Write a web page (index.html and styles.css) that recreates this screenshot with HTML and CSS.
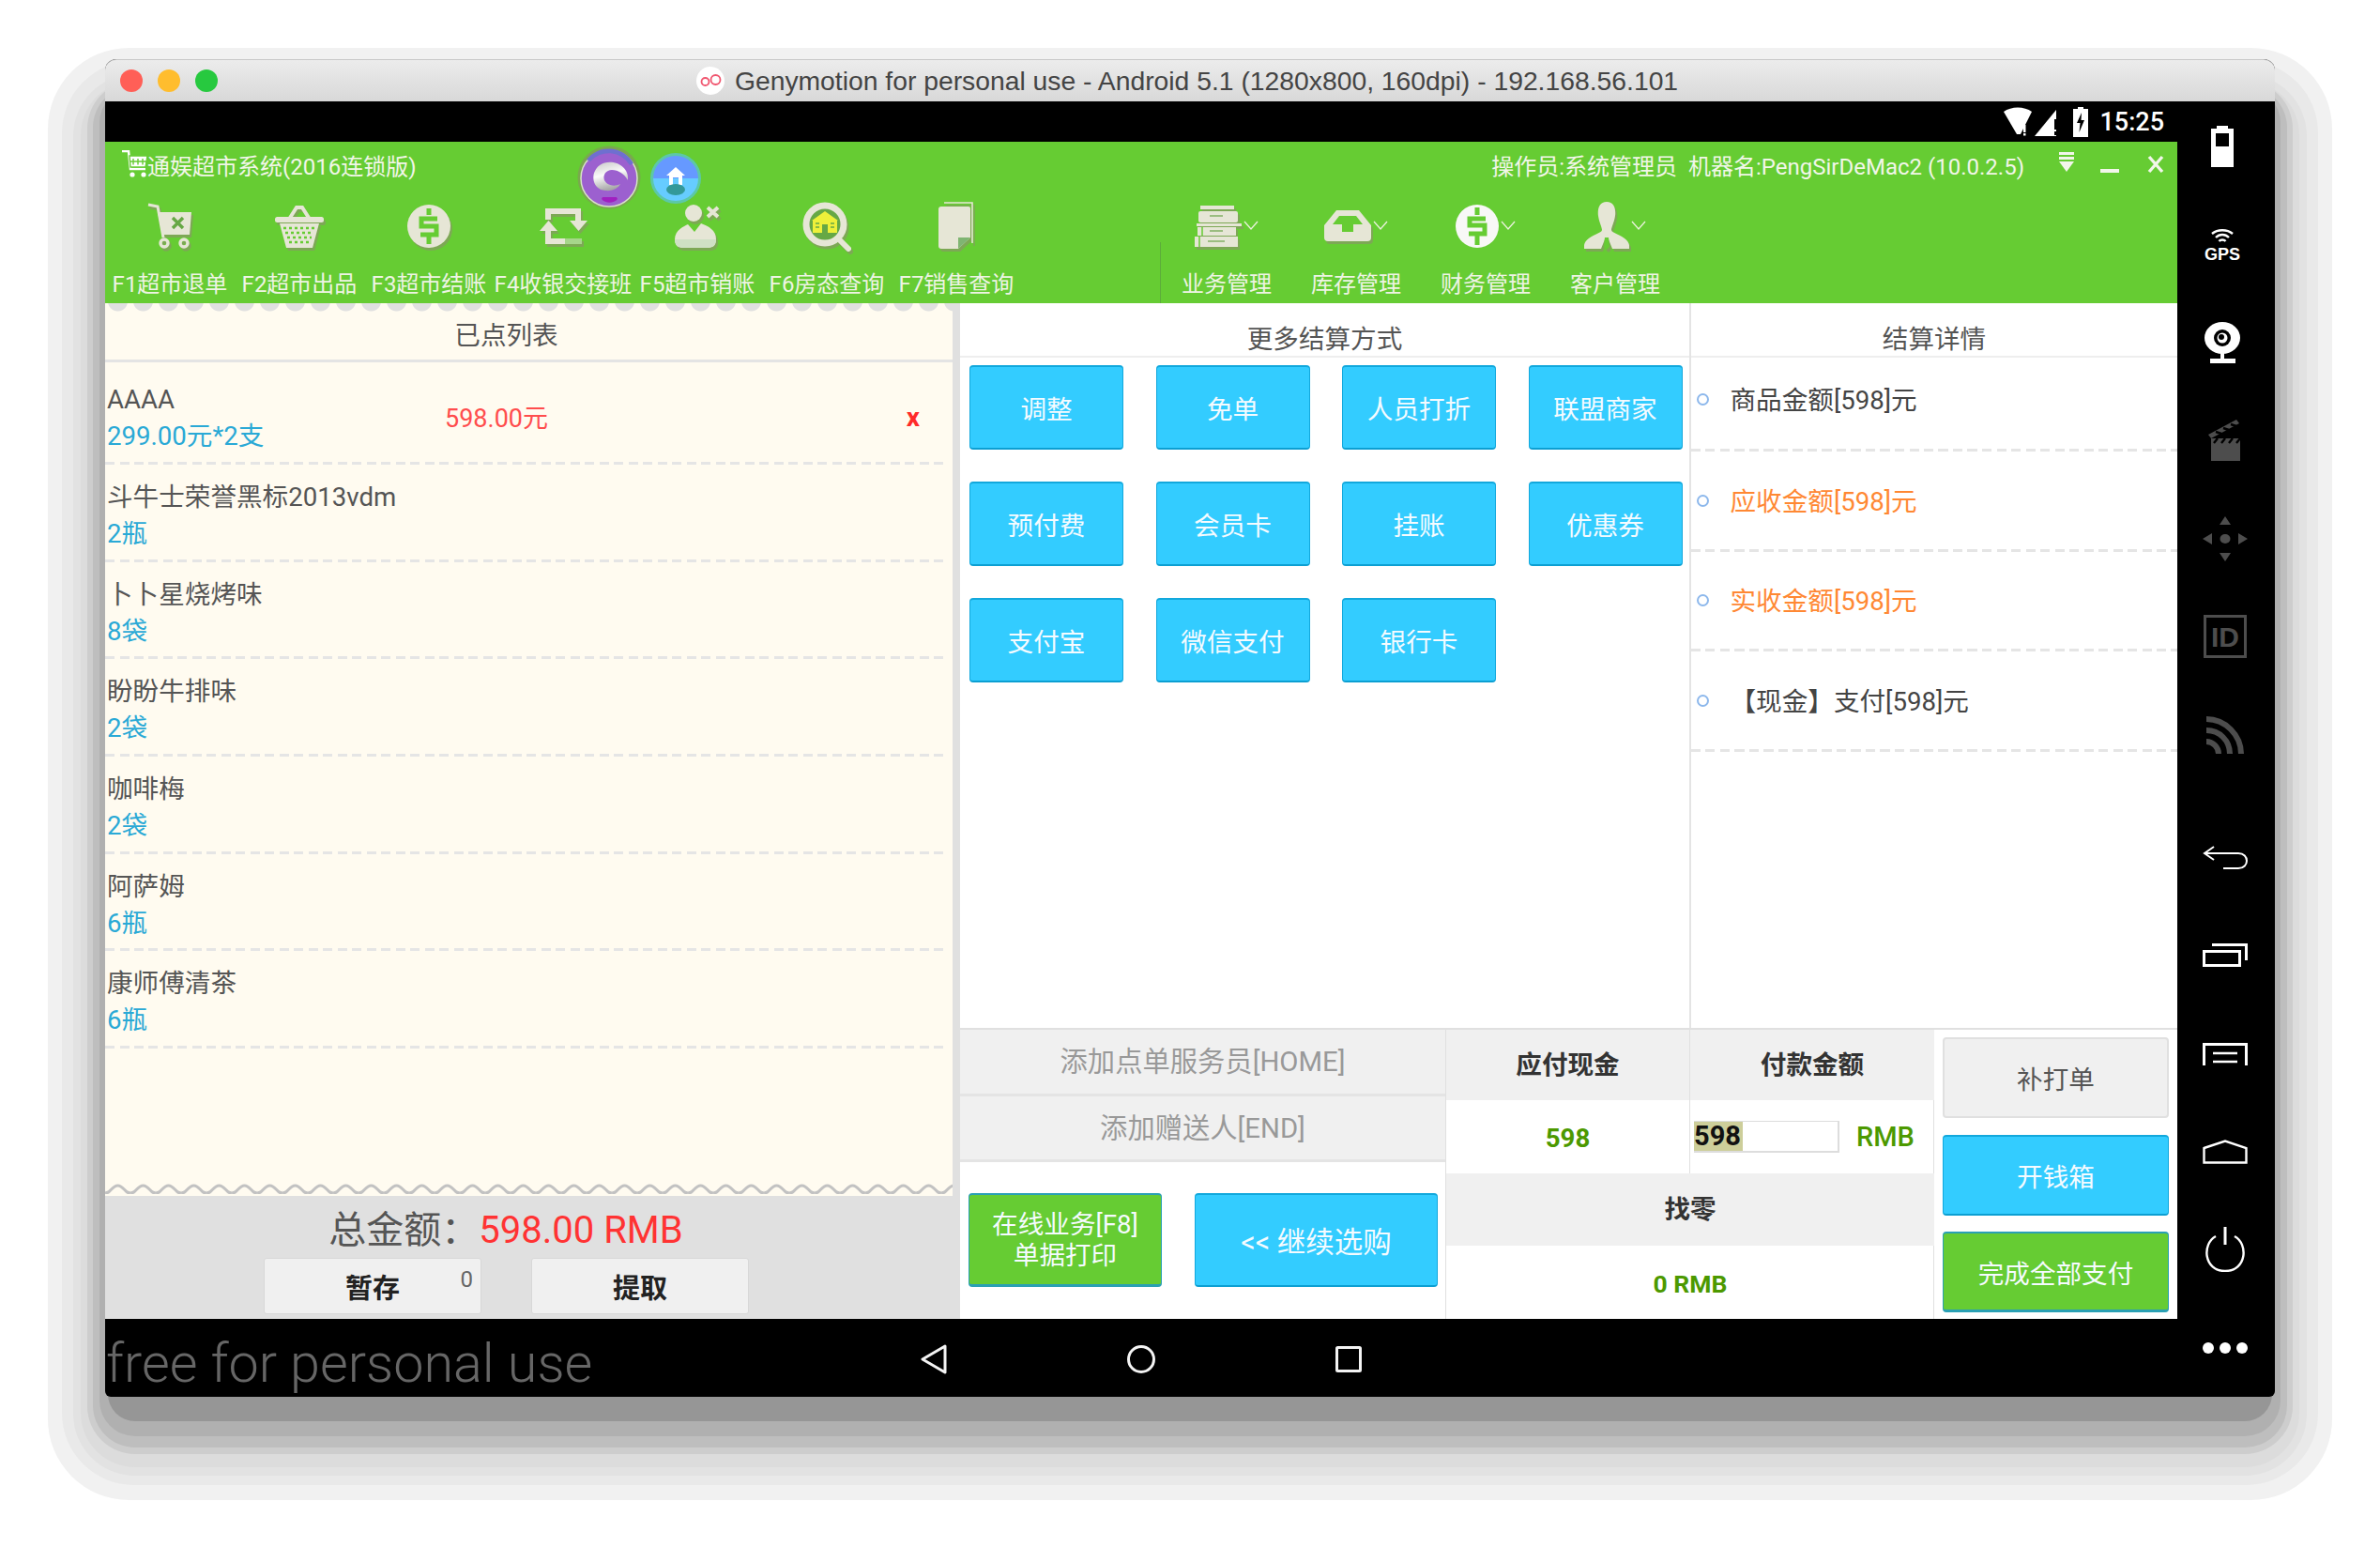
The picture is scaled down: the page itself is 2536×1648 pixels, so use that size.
FILE: index.html
```html
<!DOCTYPE html>
<html lang="zh">
<head>
<meta charset="utf-8">
<title>Genymotion</title>
<link rel="stylesheet" href="styles.css">
</head>
<body>
<div class="window">
  <header class="titlebar">
    <div class="lights"><i class="light red"></i><i class="light yellow"></i><i class="light green"></i></div>
    <div class="wintitle">
      <svg class="genylogo" viewBox="0 0 30 30" width="30" height="30"><circle cx="15" cy="15" r="15" fill="#fff"/><circle cx="9.5" cy="16" r="4" fill="none" stroke="#f0566f" stroke-width="1.8"/><circle cx="20.5" cy="14" r="5" fill="none" stroke="#f0566f" stroke-width="1.8"/></svg>
      <span>Genymotion for personal use - Android 5.1 (1280x800, 160dpi) - 192.168.56.101</span>
    </div>
  </header>
  <div class="device">
    <div class="android">
      <div class="statusbar">
        <svg viewBox="0 0 60 34" width="60" height="34" class="st-icons"><path d="M0 6 C8 0 22 0 30 6 L18 30 H14Z" fill="#fff"/><rect x="21" y="20" width="2.5" height="8" fill="#fff"/><rect x="21" y="29" width="2.5" height="2.5" fill="#fff"/><path d="M33 32 L56 4 V32Z" fill="#fff"/><rect x="54" y="14" width="3" height="11" fill="#000"/><rect x="54" y="27" width="3" height="4" fill="#000"/></svg>
        <svg viewBox="0 0 16 32" width="16" height="32" class="st-batt"><path d="M5 0 H11 V2 H16 V32 H0 V2 H5Z" fill="#fff"/><path d="M9 6 L4 17 H7.5 L6.5 27 L12 14 H8.5Z" fill="#000"/></svg>
        <span class="clock">15:25</span>
      </div>
      <div class="appbar">
        <div class="appbar-top">
          <div class="apptitle">
            <svg viewBox="0 0 28 30" width="28" height="30" class="cart-mini"><path d="M0 1 H7 L9 20 H25" fill="none" stroke="#fff" stroke-width="2.5"/><path d="M8 6 H27 L25 18 H9Z M12 9 V15.5 M17 9 V15.5 M22 9 V15.5 M8.5 12 H26" fill="#fff" stroke="#66cc33" stroke-width="1.4"/><circle cx="11" cy="26" r="2.6" fill="#fff"/><circle cx="23" cy="26" r="2.6" fill="#fff"/></svg>
            <span>通娱超市系统(2016连锁版)</span>
          </div>
          <div class="appinfo">
            <span>操作员:系统管理员&nbsp; 机器名:PengSirDeMac2 (10.0.2.5)</span>
            <svg viewBox="0 0 18 22" width="18" height="22" class="win-btn gap0"><rect x="1" y="0" width="16" height="3" fill="#f2f6ea"/><rect x="1" y="5" width="16" height="3" fill="#f2f6ea"/><path d="M1 10 H17 L9 21Z" fill="#f2f6ea"/></svg>
            <svg viewBox="0 0 20 22" width="20" height="22" class="win-btn gap1"><rect x="0" y="15" width="20" height="4" fill="#f2f6ea"/></svg>
            <svg viewBox="0 0 20 22" width="20" height="22" class="win-btn gap2"><path d="M3 3 L17 19 M17 3 L3 19" stroke="#f2f6ea" stroke-width="3.4"/></svg>
          </div>
        </div>
        <div class="toolbar">
          <div class="tool">
            <svg class="tool-ic" viewBox="0 0 46 48" width="46" height="48"><path d="M0 1 L10 3 L16 36" fill="none" stroke="currentColor" stroke-width="3"/><path d="M10 9 H46 L44 33 H15Z" fill="currentColor"/><path d="M26 15 L37 26 M37 15 L26 26" stroke="#66a845" stroke-width="3.4"/><circle cx="17" cy="42" r="4" fill="none" stroke="currentColor" stroke-width="3.4"/><circle cx="38" cy="42" r="4" fill="none" stroke="currentColor" stroke-width="3.4"/></svg>
            <span class="tool-l">F1超市退单</span>
          </div>
          <div class="tool">
            <svg class="tool-ic" viewBox="0 0 52 46" width="52" height="46"><path d="M16 14 L23 3 H29 L36 14" fill="none" stroke="currentColor" stroke-width="4"/><rect x="0" y="13" width="52" height="6" rx="2.5" fill="currentColor"/><path d="M5 20 H47 L40 46 H12Z" fill="currentColor"/><path d="M9 25 H43 M11 30 H41 M13 35 H39 M15 40 H37" stroke="#66cc33" stroke-width="2.4" stroke-dasharray="3 3"/></svg>
            <span class="tool-l">F2超市出品</span>
          </div>
          <div class="tool">
            <svg class="tool-ic" viewBox="0 0 46 46" width="46" height="46"><circle cx="23" cy="23" r="23" fill="currentColor"/><path d="M23 4 V11 M32 15 H15 V23 H31 V32 H14 M23 32 V42" fill="none" stroke="#66cc33" stroke-width="5"/></svg>
            <span class="tool-l">F3超市结账</span>
          </div>
          <div class="tool tool-wide">
            <svg class="tool-ic" viewBox="0 0 52 38" width="52" height="38"><path d="M10 12 V3 H42 V14" fill="none" stroke="currentColor" stroke-width="6"/><path d="M33 13 H52 L42.500 24Z M1 24 H20 L10.500 13Z" fill="currentColor"/><path d="M10 22 V35 H43" fill="none" stroke="currentColor" stroke-width="6"/><path d="M28 35 H46" stroke="#a6d68a" stroke-width="6"/></svg>
            <span class="tool-l">F4收银交接班</span>
          </div>
          <div class="tool">
            <svg class="tool-ic" viewBox="0 0 48 48" width="48" height="48"><circle cx="20" cy="10" r="9" fill="currentColor"/><path d="M0 38 C0 28 10 24 14 22 L21 30 L28 21 C36 24 44 28 44 38 C44 45 40 47 34 47 H10 C4 47 0 45 0 38Z" fill="currentColor"/><path d="M0 38 H44 C44 45 40 47 34 47 H10 C4 47 0 45 0 38Z" fill="#cfe0c4"/><path d="M35 4 L46 14 M46 4 L35 14" stroke="currentColor" stroke-width="4"/></svg>
            <span class="tool-l">F5超市销账</span>
          </div>
          <div class="tool">
            <svg class="tool-ic" viewBox="0 0 52 52" width="52" height="52"><circle cx="24" cy="24" r="20" fill="#66a845" stroke="currentColor" stroke-width="7"/><path d="M38 39 L49 50" stroke="currentColor" stroke-width="6" stroke-linecap="round"/><path d="M24 10 L38 20 H10Z" fill="#eef03a"/><rect x="11" y="20" width="26" height="13" fill="#eef03a"/><rect x="21" y="24" width="6" height="9" fill="#66a845"/><path d="M14 23 H18 M14 27 H18 M30 23 H34 M30 27 H34" stroke="#66a845" stroke-width="1.4"/></svg>
            <span class="tool-l">F6房态查询</span>
          </div>
          <div class="tool">
            <svg class="tool-ic" viewBox="0 0 40 52" width="40" height="52"><path d="M7 1 H37 V44" fill="none" stroke="currentColor" stroke-width="1.6"/><path d="M4 5 H33 Q35 5 35 7 V38 L22 50 H4 Q1 50 1 47 V8 Q1 5 4 5Z" fill="currentColor"/><path d="M35 38 L22 50 V38Z" fill="#7fb572"/></svg>
            <span class="tool-l">F7销售查询</span>
          </div>
          <i class="tool-sep"></i>
          <div class="tool">
            <div class="tool-row">
              <svg class="tool-ic" viewBox="0 0 50 44" width="50" height="44"><rect x="6" y="0" width="36" height="4" fill="currentColor"/><rect x="4" y="6" width="42" height="12" rx="2" fill="currentColor"/><rect x="2" y="19" width="48" height="3" fill="currentColor"/><rect x="3" y="23" width="41" height="9" fill="currentColor"/><rect x="0" y="33" width="46" height="11" fill="currentColor"/><path d="M16 11 H30 M16 27 H30 M14 38 H32" stroke="#9bbd80" stroke-width="2"/><path d="M8 23 V32 M5 33 V44" stroke="#66cc33" stroke-width="1.5"/></svg>
              <svg class="chev" viewBox="0 0 16 10" width="16" height="10"><path d="M1 1 L8 9 L15 1" fill="none" stroke="#eaf2dc" stroke-width="1.3"/></svg>
            </div>
            <span class="tool-l">业务管理</span>
          </div>
          <div class="tool">
            <div class="tool-row">
              <svg class="tool-ic" viewBox="0 0 50 36" width="50" height="36"><path d="M13 1 H37 L50 17 V30 Q50 34 46 34 H4 Q0 34 0 30 V17Z" fill="currentColor"/><path d="M16 7 H34 L41 16 H31 V24 H19 V16 H9Z" fill="#66cc33"/></svg>
              <svg class="chev" viewBox="0 0 16 10" width="16" height="10"><path d="M1 1 L8 9 L15 1" fill="none" stroke="#eaf2dc" stroke-width="1.3"/></svg>
            </div>
            <span class="tool-l">库存管理</span>
          </div>
          <div class="tool">
            <div class="tool-row">
              <svg class="tool-ic white" viewBox="0 0 46 46" width="46" height="46"><circle cx="23" cy="23" r="23" fill="#f8f8f6"/><path d="M23 3 V11 M32 15 H15 V22 H31 V31 H14 M23 31 V43" fill="none" stroke="#66cc33" stroke-width="5"/></svg>
              <svg class="chev" viewBox="0 0 16 10" width="16" height="10"><path d="M1 1 L8 9 L15 1" fill="none" stroke="#eaf2dc" stroke-width="1.3"/></svg>
            </div>
            <span class="tool-l">财务管理</span>
          </div>
          <div class="tool">
            <div class="tool-row">
              <svg class="tool-ic" viewBox="0 0 48 52" width="48" height="52"><path d="M24 0 C32 0 34 8 33 15 C32 22 29 27 29 30 C29 34 46 36 48 46 V50 H30 L26 40 H22 L18 50 H0 V46 C2 36 19 34 19 30 C19 27 16 22 15 15 C14 8 16 0 24 0Z" fill="currentColor"/><path d="M22 38 H26 L27 48 L24 51 L21 48Z" fill="#66cc33"/></svg>
              <svg class="chev" viewBox="0 0 16 10" width="16" height="10"><path d="M1 1 L8 9 L15 1" fill="none" stroke="#eaf2dc" stroke-width="1.3"/></svg>
            </div>
            <span class="tool-l">客户管理</span>
          </div>
        </div>
        <svg class="float-a" viewBox="0 0 68 70" width="68" height="70"><defs><linearGradient id="swirl" x1="0" y1="0" x2="0.3" y2="1"><stop offset="0" stop-color="#c8c8c8"/><stop offset="0.5" stop-color="#fafafa"/><stop offset="1" stop-color="#a8a8a8"/></linearGradient></defs><circle cx="34" cy="35" r="33.500" fill="#7aa84e"/><circle cx="34" cy="36" r="30" fill="#9c60cf" stroke="#d8e2c8" stroke-width="1.500"/><path d="M10 16 A30 30 0 0 1 60 20 L56 22 A26 26 0 0 0 14 18Z" fill="#6f6fd0"/><path d="M54 38 C56 22 36 14 24 22 C13 30 16 48 30 49 C38 50 44 46 46 42 C40 45 32 44 29 38 C27 32 31 27 37 27 C44 27 50 31 54 38Z" fill="url(#swirl)"/><path d="M26 58 C30 63 39 63 43 58 L42 56 H27Z" fill="#a020c0"/></svg>
        <svg class="float-b" viewBox="0 0 54 54" width="54" height="54"><circle cx="27" cy="27" r="27" fill="#5cc8a8"/><path d="M3 27 A24 24 0 0 1 51 27Z" fill="#6699ff"/><path d="M3 27 A24 24 0 0 0 51 27Z" fill="#66ccff"/><path d="M27 15 L37 24 H34 V34 H30 V26 H24 V34 H20 V24 H17Z" fill="#fff"/><ellipse cx="27" cy="39" rx="10" ry="6" fill="#339999"/></svg>
      </div>
      <main class="content">
        <section class="left">
          <div class="receipt">
            <div class="scallop"></div>
            <h2 class="receipt-h">已点列表</h2>
            <ul class="orders">
              <li class="order"><div><div class="o-name">AAAA</div><div class="o-sub">299.00元*2支</div></div><span class="o-price">598.00元</span><span class="o-del">x</span></li>
              <li class="order"><div><div class="o-name">斗牛士荣誉黑标2013vdm</div><div class="o-sub">2瓶</div></div></li>
              <li class="order"><div><div class="o-name">卜卜星烧烤味</div><div class="o-sub">8袋</div></div></li>
              <li class="order"><div><div class="o-name">盼盼牛排味</div><div class="o-sub">2袋</div></div></li>
              <li class="order"><div><div class="o-name">咖啡梅</div><div class="o-sub">2袋</div></div></li>
              <li class="order"><div><div class="o-name">阿萨姆</div><div class="o-sub">6瓶</div></div></li>
              <li class="order"><div><div class="o-name">康师傅清茶</div><div class="o-sub">6瓶</div></div></li>
            </ul>
            <svg class="wave" width="903" height="14" viewBox="0 0 903 14"><defs><pattern id="wv" width="27" height="14" patternUnits="userSpaceOnUse"><path d="M-1 0 H28 V9 C22 13 20 2 13.500 2 C7 2 5 13 -1 9Z" fill="#fffbf0"/><path d="M0 10 C5 13 7 3 13.500 3 C20 3 22 13 27 10" fill="none" stroke="#c2c2c2" stroke-width="3"/></pattern></defs><rect width="903" height="14" fill="url(#wv)"/></svg>
          </div>
          <div class="total"><span class="t-label">总金额：</span><em>598.00 RMB</em></div>
          <div class="left-btns">
            <button class="gbtn hold">暂存<sup>0</sup></button>
            <button class="gbtn">提取</button>
          </div>
        </section>
        <section class="right">
          <div class="right-top">
            <div class="more">
              <h2 class="panel-h">更多结算方式</h2>
              <div class="paygrid">
                <button class="btn blue">调整</button>
                <button class="btn blue">免单</button>
                <button class="btn blue">人员打折</button>
                <button class="btn blue">联盟商家</button>
                <button class="btn blue">预付费</button>
                <button class="btn blue">会员卡</button>
                <button class="btn blue">挂账</button>
                <button class="btn blue">优惠券</button>
                <button class="btn blue">支付宝</button>
                <button class="btn blue">微信支付</button>
                <button class="btn blue">银行卡</button>
              </div>
            </div>
            <div class="detail">
              <h2 class="panel-h">结算详情</h2>
              <ul class="details">
                <li class="d-row"><i class="dot"></i>商品金额[598]元</li>
                <li class="d-row orange"><i class="dot"></i>应收金额[598]元</li>
                <li class="d-row orange"><i class="dot"></i>实收金额[598]元</li>
                <li class="d-row"><i class="dot"></i>【现金】支付[598]元</li>
              </ul>
            </div>
          </div>
          <div class="right-bottom">
            <div class="b-left">
              <div class="addrow">添加点单服务员[HOME]</div>
              <div class="addrow">添加赠送人[END]</div>
              <div class="b-actions">
                <button class="btn green online">在线业务[F8]<br>单据打印</button>
                <button class="btn blue cont">&lt;&lt; 继续选购</button>
              </div>
            </div>
            <div class="b-table">
              <div class="th">应付现金</div>
              <div class="th bl">付款金额</div>
              <div class="td val">598</div>
              <div class="td bl payin"><span class="input"><mark>598</mark></span><span class="val rmb">RMB</span></div>
              <div class="th wide">找零</div>
              <div class="td val wide change">0 RMB</div>
            </div>
            <div class="b-right">
              <button class="btn grey">补打单</button>
              <button class="btn blue">开钱箱</button>
              <button class="btn green">完成全部支付</button>
            </div>
          </div>
        </section>
      </main>
      <footer class="navbar">
        <span class="free">free for personal use</span>
        <div class="navkeys">
          <svg viewBox="0 0 30 32" width="30" height="32"><path d="M27 2 L3 16 L27 30Z" fill="none" stroke="#f4f4f4" stroke-width="3" stroke-linejoin="round"/></svg>
          <svg viewBox="0 0 30 32" width="30" height="32"><circle cx="15" cy="16" r="13.500" fill="none" stroke="#f4f4f4" stroke-width="3"/></svg>
          <svg viewBox="0 0 30 32" width="30" height="32"><rect x="2.500" y="3.500" width="25" height="25" rx="1" fill="none" stroke="#f4f4f4" stroke-width="3"/></svg>
        </div>
      </footer>
    </div>
    <aside class="side">
      <div class="side-group">
        <div class="slot slot-l"><svg viewBox="0 0 24 44" width="24" height="44"><path d="M6 0 H18 V3 H24 V44 H0 V3 H6Z" fill="#fff"/><rect x="5" y="8" width="14" height="14" fill="#000"/></svg></div>
        <div class="slot slot-l"><svg viewBox="0 -4 44 44" width="44" height="44"><path d="M11 6 C17 1 27 1 33 6 M15 10 C19 6 25 6 29 10 M18.500 14 C20 12 24 12 25.500 14" fill="none" stroke="#fff" stroke-width="2.400"/><text x="22" y="34" class="gps">GPS</text></svg></div>
        <div class="slot slot-l"><svg viewBox="0 0 38 44" width="38" height="44"><ellipse cx="19" cy="17" rx="19" ry="17" fill="#fff"/><circle cx="19" cy="17" r="9" fill="#000"/><circle cx="19" cy="17" r="5.500" fill="#fff"/><circle cx="18" cy="16" r="3" fill="#000"/><rect x="17" y="33" width="4" height="6" fill="#fff"/><rect x="6" y="39" width="27" height="5" fill="#fff"/></svg></div>
        <div class="slot"><svg viewBox="0 0 36 44" width="36" height="44"><path d="M0 16 L30 0 L33 4 L3 20Z" fill="#4d4d4d"/><path d="M8 13 L14 15 M16 9 L22 11 M24 5 L30 7" stroke="#000" stroke-width="2.400"/><rect x="3" y="20" width="31" height="24" fill="#4d4d4d"/><path d="M6 25 L10 20 M14 25 L18 20 M22 25 L26 20 M30 25 L34 20" stroke="#000" stroke-width="2.400"/></svg></div>
        <div class="slot"><svg viewBox="0 0 48 48" width="48" height="48"><path d="M24 0 L30 9 H18Z M24 48 L18 39 H30Z M0 24 L10 18 V30Z M48 24 L38 30 V18Z" fill="#4d4d4d"/><ellipse cx="24" cy="24" rx="5.500" ry="5" fill="#4d4d4d"/></svg></div>
        <div class="slot"><svg viewBox="0 0 46 46" width="46" height="46"><rect x="1.500" y="1.500" width="43" height="43" fill="none" stroke="#4d4d4d" stroke-width="3"/><text x="23" y="34" class="idt">ID</text></svg></div>
        <div class="slot"><svg viewBox="0 0 40 40" width="40" height="40"><path d="M0 3 C20 3 37 20 37 40 M0 15 C14 15 25 26 25 40 M0 27 C7 27 13 33 13 40" fill="none" stroke="#4d4d4d" stroke-width="6"/></svg></div>
      </div>
      <div class="side-group second">
        <div class="slot"><svg viewBox="0 0 48 26" width="48" height="26"><path d="M12 1 L2 8 L12 15 M2 8 H38 C50 8 50 24 38 24 H22" fill="none" stroke="#fff" stroke-width="2"/></svg></div>
        <div class="slot"><svg viewBox="0 0 48 26" width="48" height="26"><rect x="1.500" y="8.500" width="38" height="15" fill="none" stroke="#fff" stroke-width="3"/><path d="M10 1.500 H46.500 V18" fill="none" stroke="#fff" stroke-width="3"/></svg></div>
        <div class="slot"><svg viewBox="0 0 48 24" width="48" height="24"><path d="M1.500 24 V1.500 H46.500 V24" fill="none" stroke="#fff" stroke-width="3"/><path d="M11 11 H37 M11 20 H37" stroke="#fff" stroke-width="2.400"/></svg></div>
        <div class="slot"><svg viewBox="0 0 48 26" width="48" height="26"><path d="M1.500 9 L24 1.500 L46.500 9 V24.500 H1.500Z" fill="none" stroke="#fff" stroke-width="2.400"/></svg></div>
        <div class="slot"><svg viewBox="0 0 46 48" width="46" height="48"><path d="M13 10 C-2 18 0 47 23 47 C46 47 48 18 33 10" fill="none" stroke="#fff" stroke-width="2.400"/><path d="M23 0 V19" stroke="#fff" stroke-width="3"/></svg></div>
        <div class="slot"><svg viewBox="0 0 48 12" width="48" height="12"><circle cx="6" cy="6" r="6" fill="#fff"/><circle cx="24" cy="6" r="6" fill="#fff"/><circle cx="42" cy="6" r="6" fill="#fff"/></svg></div>
      </div>
    </aside>
  </div>
</div>
</body>
</html>
```
FILE: styles.css
```css
* { box-sizing: border-box; }
html { margin: 0; background: #fff; }
body {
  width: 2536px;
  height: 1648px;
  margin: 0;
  padding: 63px 0 0 112px;
  overflow: hidden;
  font-family: Roboto, "Noto Sans CJK SC", sans-serif;
  font-size: 27.6px;
  color: #555;
}
ul { list-style: none; margin: 0; padding: 0; }
h2 { margin: 0; font-weight: 400; font-size: 27.6px; text-align: center; color: #555; }

.window {
  position: relative;
  width: 2312px;
  height: 1425px;
  border-radius: 12px 12px 6px 6px;
  background: #000;
}
.window::before {
  content: "";
  position: absolute;
  inset: 0;
  z-index: -1;
  border-radius: 32px;
  box-shadow:
    0 29px 0 -3px #969696,
    0 36px 0 6px #b0b0b0,
    0 41px 0 13px #bebebe,
    0 42px 0 19px #cdcdcd,
    0 49px 0 26px #dcdcdc,
    0 50px 0 34px #e2e2e2,
    0 48px 0 46px #e9e9e9,
    0 49px 0 61px #f1f1f1;
}

.titlebar {
  position: relative;
  display: flex;
  align-items: center;
  justify-content: center;
  height: 45px;
  border-radius: 12px 12px 0 0;
  background: linear-gradient(#ececec, #d8d8d8);
  border-top: 1px solid #c8c8c8;
}
.lights { position: absolute; left: 16px; top: 10px; display: flex; gap: 16px; }
.light { width: 24px; height: 24px; border-radius: 50%; }
.light.red { background: #ff5f57; }
.light.yellow { background: #ffbd2e; }
.light.green { background: #27c93f; }
.wintitle {
  display: flex;
  align-items: center;
  gap: 11px;
  margin-left: -6px;
  font-family: "Liberation Sans", sans-serif;
  font-size: 28.3px;
  color: #444;
  white-space: nowrap;
}

.device { display: grid; grid-template-columns: 2208px 104px; height: 1380px; }
.android { display: flex; flex-direction: column; min-width: 0; }

.statusbar { display: flex; align-items: center; justify-content: flex-end; height: 43px; padding-right: 14px; color: #fff; }
.st-icons { margin-right: 14px; }
.st-batt { margin-right: 12px; }
.clock { font-size: 27px; font-weight: 500; }

.appbar { position: relative; display: flex; flex-direction: column; height: 172px; background: #66cc33; color: #f1f6e8; }
.appbar-top { display: flex; justify-content: space-between; height: 60px; padding: 6px 13px 0 18px; }
.apptitle { display: flex; align-items: center; height: 36px; font-size: 24px; color: #f1f6e8; }
.cart-mini { flex: none; margin-right: -1px; }
.appinfo { display: flex; align-items: center; height: 36px; font-size: 24px; white-space: nowrap; }
.win-btn { flex: none; }
.gap0 { margin-left: 36px; margin-top: -4px; }
.gap1 { margin-left: 27px; margin-top: 2px; }
.gap2 { margin-left: 29px; }

.toolbar { display: flex; flex: 1; }
.tool { position: relative; display: flex; flex: none; flex-direction: column; align-items: center; width: 138px; }
.tool-wide { width: 148px; }
.tool-row { display: flex; align-items: center; justify-content: center; height: 60px; gap: 2px; }
.tool > .tool-ic { height: 60px; padding: 4px 0; }
.tool-ic { flex: none; color: #e6e6d6; filter: drop-shadow(2px 3px 0 #7da855); overflow: visible; }
.tool-ic.white { filter: none; }
.tool-l { margin-top: 14px; font-size: 24px; line-height: 36px; white-space: nowrap; color: #eef4e4; }
.tool-sep { flex: none; align-self: flex-end; width: 1px; height: 65px; margin-left: 148px; margin-right: 1px; background: #5cac3a; }
.chev { flex: none; margin-top: -2px; }
.float-a { position: absolute; left: 503px; top: 3px; }
.float-b { position: absolute; left: 581px; top: 12px; }

.content { display: flex; height: 1082px; background: #fff; }
.left { display: flex; flex: none; flex-direction: column; width: 911px; background: #e0e0e0; }
.receipt { display: flex; flex-direction: column; width: 903px; height: 951px; background: #fffbf0; }
.scallop {
  flex: none;
  height: 10px;
  background: radial-gradient(circle at 13.5px -2px, #e0e0e0 10px, transparent 11px) 0 0 / 27px 10px repeat-x;
}
.receipt-h { flex: none; height: 53px; padding-right: 48px; border-bottom: 3px solid #e4e4e4; line-height: 50px; }
.orders { flex: 1; padding-top: 5.5px; }
.order {
  display: grid;
  grid-template-columns: 360px 1fr auto;
  align-items: center;
  height: 103.65px;
  margin-right: 7px;
  padding: 0 26px 0 2px;
  background: repeating-linear-gradient(90deg, #e5e5e5 0 10px, transparent 10px 15.5px) 0 100% / 100% 3px no-repeat;
}
.order > div { margin-top: 4px; }
.o-name { line-height: 39px; color: #555; white-space: nowrap; }
.o-sub { line-height: 39px; color: #2aa9d6; white-space: nowrap; }
.o-price { color: #ff4d4d; font-size: 27px; margin-top: 1px; }
.o-del { color: #ff2a2a; font-weight: 700; font-size: 28px; margin-right: 2px; margin-top: 2px; }
.wave { flex: none; display: block; }

.total { flex: none; width: 854px; height: 63px; margin-top: 2px; padding-top: 6px; text-align: center; font-size: 40px; line-height: 58px; color: #555; }
.t-label { font-family: Roboto, "Noto Sans CJK TC", sans-serif; }
.total em { font-style: normal; color: #ff3333; }
.left-btns { display: flex; gap: 53px; margin-top: 1px; padding-left: 169px; }
.gbtn {
  position: relative;
  width: 232px;
  height: 60px;
  border: 1px solid #d8d8d8;
  border-radius: 3px;
  background: #f0f0f0;
  font: 700 29px Roboto, "Noto Sans CJK SC", sans-serif;
  color: #222;
  padding: 0;
}
.gbtn sup { position: absolute; right: 8px; top: 8px; font-size: 24px; font-weight: 400; line-height: 28px; color: #666; }

.right { display: flex; flex: 1; flex-direction: column; min-width: 0; }
.right-top { display: flex; height: 772px; }
.more { flex: none; width: 779px; border-right: 2px solid #e4e4e4; }
.detail { flex: 1; min-width: 0; }
.panel-h { height: 58px; padding-top: 20px; line-height: 38px; border-bottom: 2px solid #eee; }
.paygrid { display: grid; grid-template-columns: repeat(4, 164px); grid-auto-rows: 90px; column-gap: 34.5px; row-gap: 34px; padding: 8px 0 0 10px; }
.btn {
  border-radius: 4px;
  border: 0;
  padding: 0;
  font: 400 27.6px Roboto, "Noto Sans CJK SC", sans-serif;
  color: #f5fbff;
}
.btn.blue { background: #33ccff; border: 1px solid #12a8dc; border-top-width: 2px; border-bottom: 2px solid #0c9fd2; }
.btn.green { background: #66cc33; border: 1px solid #2aa0b4; border-top-width: 2px; border-bottom-width: 3px; }
.btn.grey { background: #f0f0f0; border: 2px solid #e0e0e0; color: #555; }

.d-row {
  display: flex;
  height: 106.7px;
  padding: 34.5px 0 0 8px;
  line-height: 38px;
  color: #444;
  background: repeating-linear-gradient(90deg, #e5e5e5 0 10px, transparent 10px 15.5px) 0 100% / 100% 3px no-repeat;
}
.d-row:first-child { height: 100px; padding-top: 27px; }
.d-row.orange { color: #ff8833; }
.dot { flex: none; width: 13px; height: 13px; margin: 11px 22.5px 0 -2px; border: 2px solid #8db8ec; border-radius: 50%; }

.right-bottom { display: flex; height: 310px; border-top: 2px solid #e0e0e0; }
.b-left { flex: none; width: 518px; border-right: 1px solid #e0e0e0; }
.addrow { height: 71px; border-bottom: 3px solid #e4e4e4; background: #f0f0f0; text-align: center; line-height: 68px; font-size: 29.3px; color: #999; }
.addrow + .addrow { height: 70px; }
.b-actions { display: flex; gap: 35px; padding: 33px 0 0 9px; }
.online { width: 206px; height: 100px; font-size: 27.6px; line-height: 33px; }
.cont { width: 259px; height: 100px; font-size: 30.5px; }

.b-table { flex: none; display: grid; grid-template-columns: 259px 261px; grid-template-rows: 75px 78px 77px 1fr; width: 520px; border-right: 1px solid #e0e0e0; }
.th { display: flex; align-items: center; justify-content: center; padding-bottom: 5px; background: #f0f0f0; font-weight: 700; color: #333; }
.td { display: flex; align-items: center; justify-content: center; padding-top: 2px; }
.bl { border-left: 1px solid #e0e0e0; }
.wide { grid-column: 1 / -1; }
.val { color: #4c9900; font-weight: 700; }
.rmb { font-size: 29px; font-weight: 500; }
.change { font-size: 26.5px; }
.payin { justify-content: flex-start; gap: 18px; padding: 0 0 0 4px; }
.input { display: flex; width: 155px; height: 34px; border: 2px solid #ddd; border-left: 0; border-top-width: 1px; font-size: 29px; font-weight: 700; color: #111; line-height: 30px; }
.input mark { width: 52px; background: #cdce9a; color: #111; }
.b-right { flex: 1; display: grid; grid-auto-rows: 86px; row-gap: 17.5px; padding: 8px 9px 0 9px; }

.navbar { display: flex; align-items: center; flex: 1; }
.free { flex: none; width: 868px; font-size: 57.5px; font-weight: 300; line-height: 83px; color: #666; padding-left: 1px; padding-top: 6px; white-space: nowrap; }
.navkeys { display: flex; align-items: center; gap: 191px; margin-top: -4px; }

.side { min-width: 0; }
.side-group { margin-top: -4px; }
.side-group.second { margin-top: 27px; }
.slot { display: flex; align-items: center; justify-content: center; height: 104.4px; padding-right: 3px; }
.slot-l { padding-right: 9px; }
.gps { font: 700 18px "Liberation Sans", sans-serif; fill: #fff; text-anchor: middle; }
.idt { font: 700 30px "Liberation Sans", sans-serif; fill: #4d4d4d; text-anchor: middle; }
```
